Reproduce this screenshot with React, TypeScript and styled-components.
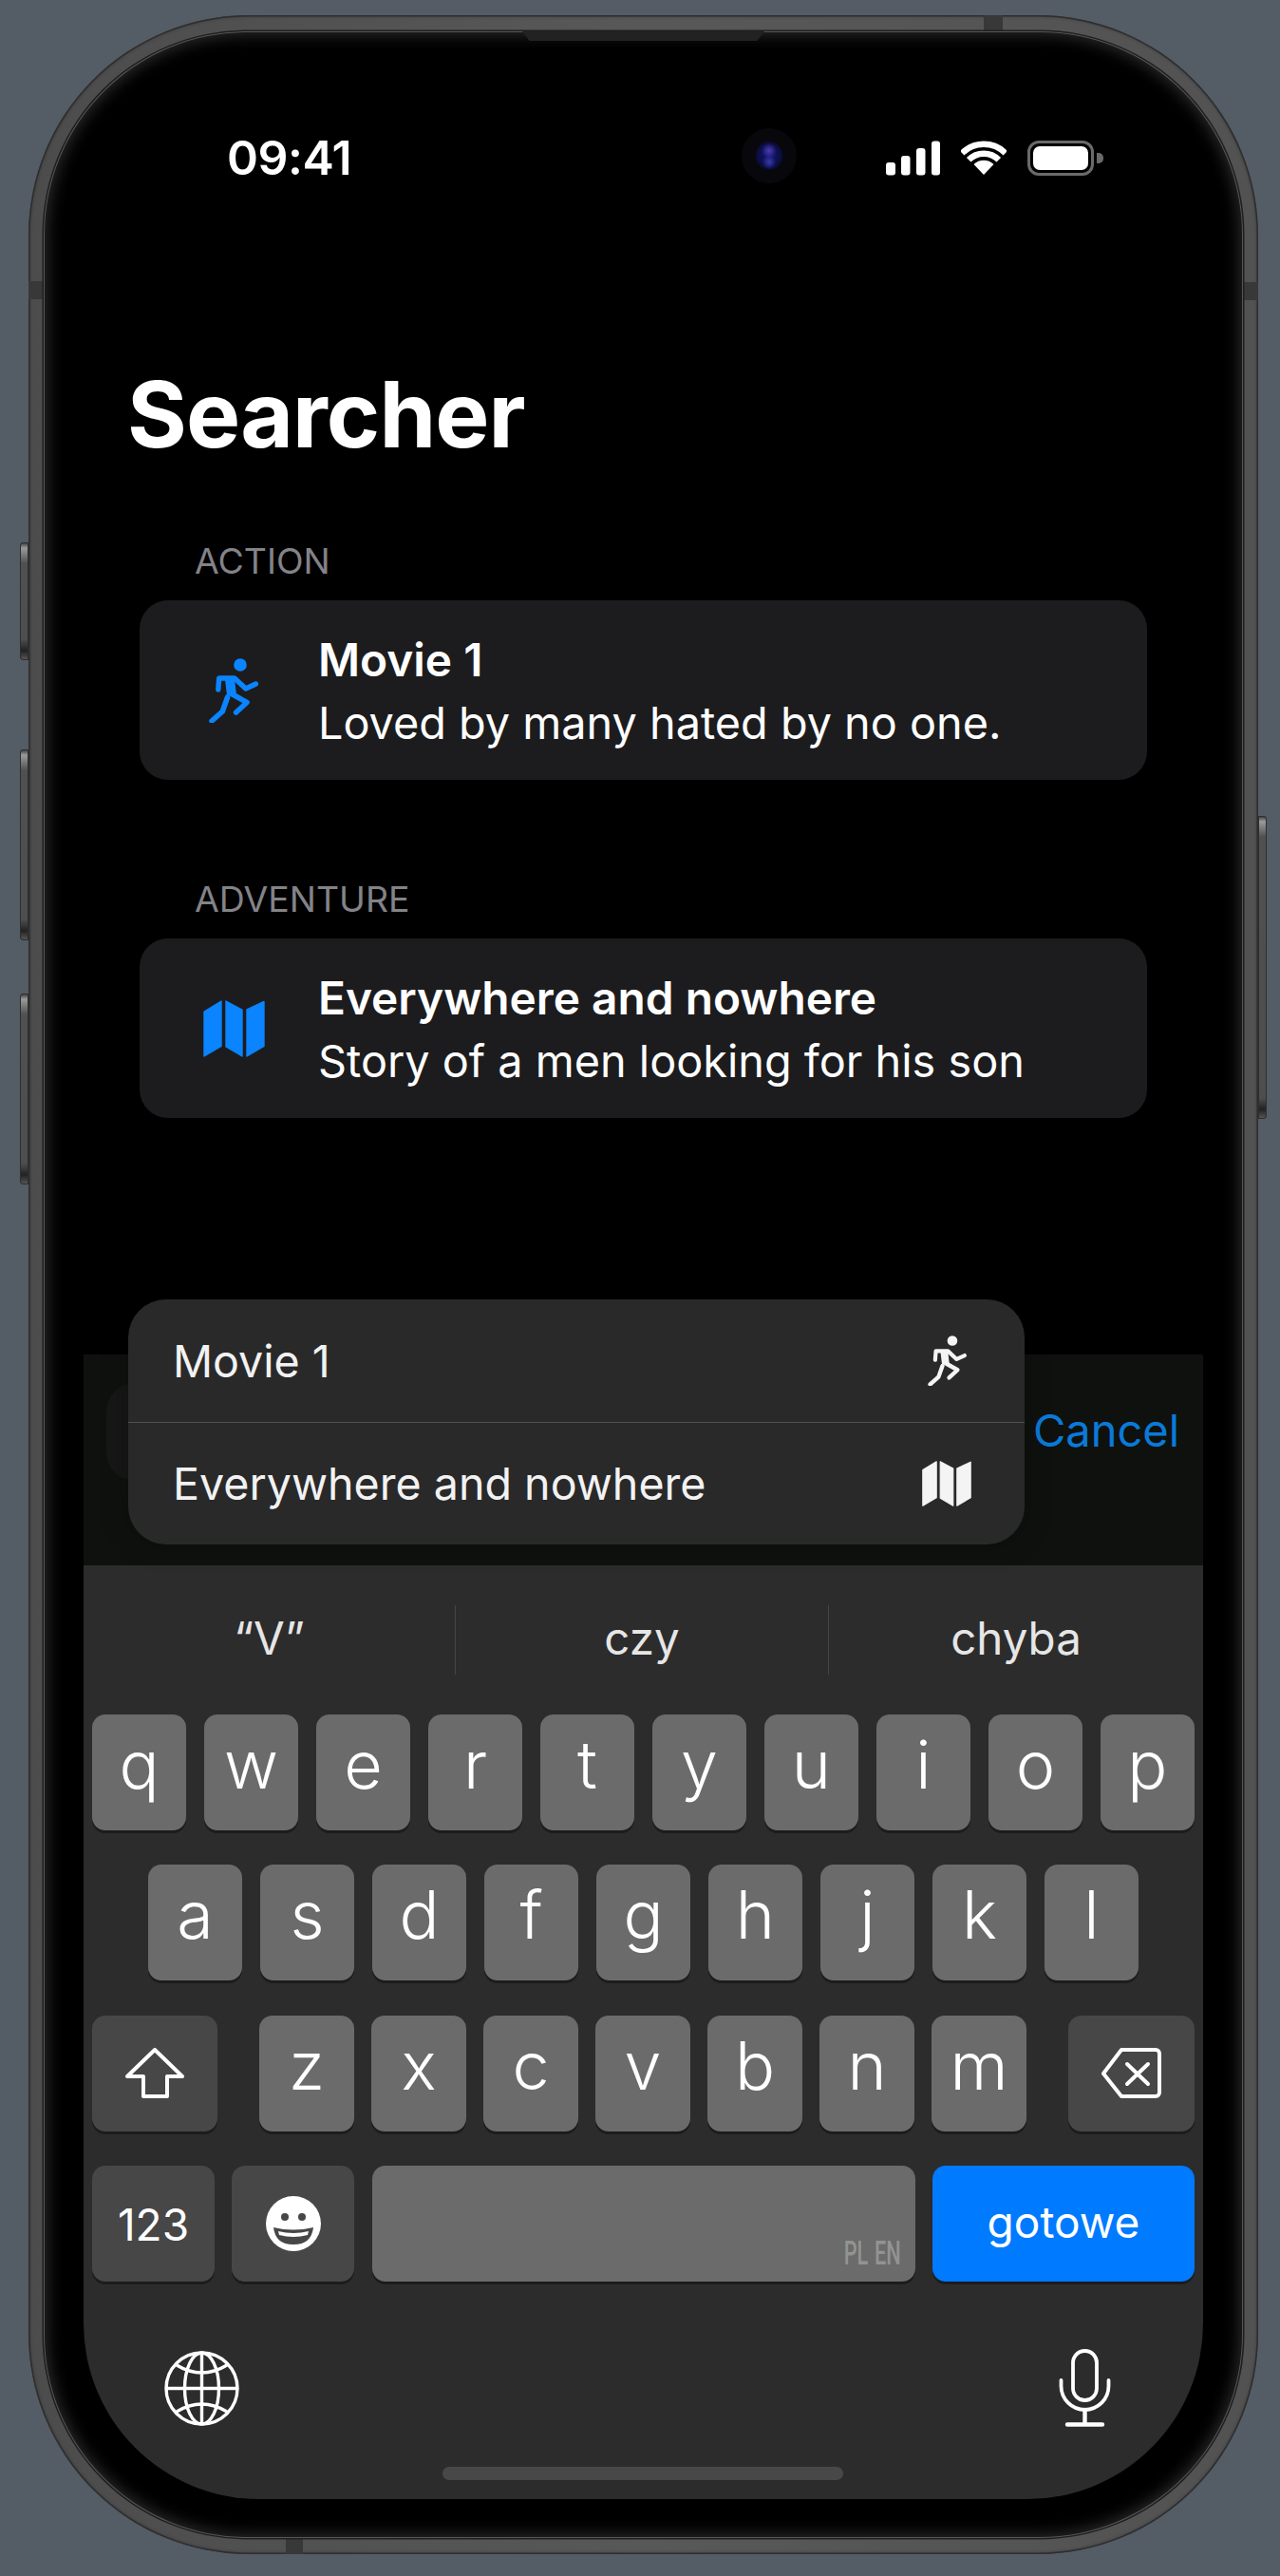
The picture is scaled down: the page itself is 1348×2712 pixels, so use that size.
import React from "react";
import styled, { createGlobalStyle } from "styled-components";

const Global = createGlobalStyle`
  html, body { margin: 0; padding: 0; background: #545c66; }
  body { font-family: "Inter", "Liberation Sans", sans-serif; -webkit-font-smoothing: antialiased; }
  * { box-sizing: border-box; }
`;

const Page = styled.div`
  width: 1348px;
  height: 2712px;
  padding: 16px 0 0 30px;
  background: #545c66;
  overflow: hidden;
`;

const Phone = styled.div`
  position: relative;
  width: 1295px;
  height: 2673px;
  padding: 17px 16px;
  border-radius: 232px;
  background: linear-gradient(90deg, #4c4c4c, #585858 50%, #525252);
  box-shadow: inset 0 0 0 1.5px #2e2e2e, inset 0 0 3px 2px rgba(30, 30, 30, 0.3);
`;

const SideButton = styled.div<{ $side: "left" | "right"; $top: number; $height: number }>`
  position: absolute;
  top: ${(p) => p.$top}px;
  height: ${(p) => p.$height}px;
  width: 9px;
  ${(p) => (p.$side === "left" ? "left: -9px; border-radius: 4px 0 0 4px;" : "right: -9px; border-radius: 0 4px 4px 0;")}
  background: linear-gradient(180deg, #333 0, #9a9a9a 6px, #505050 22px, #4e4e4e calc(100% - 22px), #222 calc(100% - 10px), #5a5a5a 100%);
  box-shadow: inset 0 0 0 1px #2e2e2e;
`;

const Antenna = styled.div<{ $x: number; $y: number; $w: number; $h: number }>`
  position: absolute;
  left: ${(p) => p.$x}px;
  top: ${(p) => p.$y}px;
  width: ${(p) => p.$w}px;
  height: ${(p) => p.$h}px;
  background: #383838;
`;

const Speaker = styled.div`
  position: absolute;
  left: 520px;
  top: 17px;
  width: 255px;
  height: 10px;
  background: #222;
  clip-path: polygon(0 0, 100% 0, 97% 100%, 3% 100%);
  z-index: 1;
`;

const Screen = styled.div`
  position: relative;
  width: 1263px;
  height: 2639px;
  padding: 42px 0 0 42px;
  border-radius: 214px;
  background: #000;
  box-shadow: 0 0 0 1.5px #1f1f1f, inset 0 0 0 1px #555, inset 0 0 16px 4px rgba(120, 120, 120, 0.36);
`;

const Display = styled.div`
  position: relative;
  width: 1179px;
  height: 2556px;
  display: flex;
  flex-direction: column;
  color: #fff;
`;

const StatusBar = styled.div`
  height: 182px;
  padding-left: 151px;
  display: grid;
  grid-template-columns: 542px 58px auto;
  align-items: center;
`;

const Time = styled.div`
  font-size: 50px;
  font-weight: 600;
  line-height: 60px;
  letter-spacing: -0.5px;
`;

const Camera = styled.div`
  width: 58px;
  height: 58px;
  margin-top: -4px;
  border-radius: 50%;
  background: #08080c;
  display: flex;
  align-items: center;
  justify-content: center;
`;

const Lens = styled.div`
  width: 28px;
  height: 30px;
  border-radius: 50%;
  background:
    radial-gradient(circle at 50% 32%, #4c3cb0 0, rgba(60, 48, 160, 0) 32%),
    radial-gradient(circle at 50% 72%, #3a3ca8 0, rgba(50, 60, 160, 0) 28%),
    radial-gradient(circle at 50% 50%, #15187a 0, #0c0f4c 50%, #06061a 100%);
`;

const StatusIcons = styled.div`
  margin-left: 94px;
  display: flex;
  align-items: center;
  gap: 22px;
`;

const Battery = styled.div`
  position: relative;
  width: 70px;
  height: 37px;
  padding: 3px;
  border: 3px solid #6a6a6a;
  border-radius: 12px;
  &::after {
    content: "";
    position: absolute;
    right: -13px;
    top: 10px;
    width: 7px;
    height: 11px;
    border-radius: 0 5px 5px 0;
    background: #6a6a6a;
  }
`;

const BatteryFill = styled.div`
  width: 100%;
  height: 100%;
  border-radius: 7px;
  background: #fff;
`;

const Title = styled.h1`
  margin: 119px 0 72px 46px;
  height: 120px;
  font-size: 96px;
  line-height: 120px;
  font-weight: 700;
  letter-spacing: -0.9px;
`;

const Section = styled.section`
  padding: 0 59px;
  margin-bottom: 103px;
`;

const SectionLabel = styled.div`
  height: 46px;
  margin: 0 0 18px 58px;
  font-size: 37.4px;
  line-height: 46px;
  color: #838388;
`;

const Card = styled.div`
  height: 189px;
  padding-left: 49px;
  display: flex;
  align-items: center;
  gap: 39px;
  border-radius: 30px;
  background: #1c1c1e;
`;

const CardIcon = styled.div`
  width: 100px;
  display: flex;
  justify-content: center;
  color: #0a84ff;
`;

const CardText = styled.div`
  padding-top: 2px;
  font-size: 46.8px;
  line-height: 66px;
`;

const CardTitle = styled.div`
  font-size: 47.8px;
  font-weight: 600;
`;

const SearchBar = styled.div`
  margin-top: auto;
  height: 222px;
  padding: 30px 0 0 24px;
  display: flex;
  align-items: flex-start;
  background: #0f110f;
`;

const SearchField = styled.div`
  width: 966px;
  height: 103px;
  border-radius: 30px;
  background: #161716;
`;

const Cancel = styled.div`
  margin-left: 10px;
  height: 103px;
  font-size: 47px;
  line-height: 100px;
  color: #0a7ad9;
`;

const Popup = styled.div`
  position: absolute;
  left: 47px;
  top: 1293px;
  width: 944px;
  border-radius: 40px;
  background: #29292a;
  box-shadow: 0 0 30px rgba(0, 0, 0, 0.25);
`;

const PopupRow = styled.div<{ $divided?: boolean }>`
  height: 129px;
  padding: 0 52px 0 47px;
  display: flex;
  align-items: center;
  justify-content: space-between;
  font-size: 46.6px;
  color: #f2f2f2;
  border-top: ${(p) => (p.$divided ? "1px solid #505051" : "none")};
`;

const PopupIcon = styled.div`
  width: 60px;
  display: flex;
  justify-content: center;
  color: #f4f4f4;
`;

const Keyboard = styled.div`
  height: 983px;
  flex: none;
  background: #2c2c2c;
  border-radius: 0 0 185px 185px;
`;

const Suggestions = styled.div`
  height: 157px;
  display: grid;
  grid-template-columns: 391px 1px 392px 1px 1fr;
  align-items: center;
`;

const Suggestion = styled.div`
  text-align: center;
  font-size: 47.5px;
  line-height: 60px;
  margin-top: -4px;
  color: #e6e6e6;
`;

const SuggestionDivider = styled.div`
  height: 73px;
  background: #454545;
`;

const Keys = styled.div`
  padding: 0 9px;
  display: flex;
  flex-direction: column;
  gap: 36.4px;
`;

const KeyRow = styled.div`
  display: flex;
  justify-content: center;
  gap: 18.4px;
`;

const SpreadRow = styled.div`
  display: flex;
  justify-content: space-between;
`;

const LetterGroup = styled.div`
  display: flex;
  gap: 18.4px;
`;

const Key = styled.div<{ $tone?: "letter" | "fn" | "blue"; $w?: number; $grow?: boolean }>`
  position: relative;
  flex: ${(p) => (p.$grow ? "1" : "none")};
  width: ${(p) => (p.$w ? `${p.$w}px` : "99.6px")};
  height: 122px;
  display: flex;
  align-items: center;
  justify-content: center;
  border-radius: 14px;
  background: ${(p) => (p.$tone === "fn" ? "#474747" : p.$tone === "blue" ? "#007aff" : "#6b6b6b")};
  box-shadow: 0 3px 0 #1c1c1c;
  color: #fff;
`;

const Letter = styled.span`
  font-size: 70px;
  font-weight: 300;
  line-height: 90px;
  padding-bottom: 16px;
`;

const FnLabel = styled.span<{ $drop?: number }>`
  font-size: 46px;
  line-height: 60px;
  margin-top: ${(p) => p.$drop || 0}px;
`;

const SpaceHint = styled.span`
  position: absolute;
  right: 15px;
  bottom: 9px;
  font-family: "Roboto", "Liberation Sans", sans-serif;
  font-size: 35px;
  font-weight: 500;
  line-height: 40px;
  word-spacing: 2px;
  color: #939393;
  transform: scaleX(0.62);
  transform-origin: right center;
  white-space: nowrap;
`;

const BottomBar = styled.div`
  height: 82px;
  margin-top: 71px;
  padding: 0 97px 0 85px;
  display: flex;
  align-items: center;
  justify-content: space-between;
`;

const HomeBar = styled.div`
  position: absolute;
  left: 378px;
  top: 2522px;
  width: 422px;
  height: 14px;
  border-radius: 7px;
  background: #484848;
`;

const Run = ({ w, h }: { w: number; h: number }) => (
  <svg width={w} height={h} viewBox="0 0 52 68" fill="none" stroke="currentColor" strokeLinecap="round" strokeLinejoin="round">
    <circle cx="33" cy="7" r="6.8" fill="currentColor" stroke="none" />
    <path d="M9.8 33 L10.7 21 H27 L38.8 32 L49.5 27" strokeWidth="5.4" />
    <path d="M22 22 L24 39" strokeWidth="10" strokeLinecap="butt" />
    <path d="M19.6 41 L14.3 56 L3 66" strokeWidth="5.6" />
    <path d="M24 37.5 L40 46.5 L28.6 57" strokeWidth="5.6" />
  </svg>
);

const MapIcon = ({ w, h }: { w: number; h: number }) => (
  <svg width={w} height={h} viewBox="0 0 65 60" fill="currentColor" stroke="currentColor" strokeWidth="1.4" strokeLinejoin="round">
    <path d="M1 12 L19 1 V48.5 L1 59 Z" />
    <path d="M24 1 L41 10 V59 L24 49 Z" />
    <path d="M46 10 L64 1.5 V48.5 L46 59 Z" />
  </svg>
);

const Signal = () => (
  <svg width="57" height="37" viewBox="0 0 57 37" fill="#fff">
    <rect x="0" y="23" width="10" height="13.5" rx="3" />
    <rect x="16" y="16" width="9.5" height="20.5" rx="3" />
    <rect x="32" y="8" width="9.5" height="28.5" rx="3" />
    <rect x="48" y="0.5" width="9" height="36" rx="3" />
  </svg>
);

const Wifi = () => (
  <svg width="48" height="36" viewBox="0 0 48 36" fill="none" stroke="#fff" strokeWidth="6.4">
    <path d="M24 36 L13.5 25 A15 15 0 0 1 34.5 25 Z" fill="#fff" stroke="none" />
    <path d="M8.2 20.2 A22.4 22.4 0 0 1 39.8 20.2" />
    <path d="M1.2 13.2 A32.3 32.3 0 0 1 46.8 13.2" />
  </svg>
);

const Shift = () => (
  <svg width="62" height="54" viewBox="0 0 62 54" fill="none" stroke="#fff" strokeWidth="4" strokeLinejoin="round">
    <path d="M31 2 L60 30 H44 V51 H19 V30 H2 Z" />
  </svg>
);

const Delete = () => (
  <svg width="63" height="53" viewBox="0 0 63 53" fill="none" stroke="#fff" strokeWidth="4" strokeLinejoin="round" strokeLinecap="round">
    <path d="M21 2 H57 a4 4 0 0 1 4 4 V47 a4 4 0 0 1 -4 4 H21 L2 27 Z" />
    <path d="M27 17 L49 38 M49 17 L27 38" />
  </svg>
);

const Emoji = () => (
  <svg width="58" height="58" viewBox="0 0 58 58">
    <circle cx="29" cy="29" r="29" fill="#fff" />
    <circle cx="20" cy="22" r="4" fill="#474747" />
    <circle cx="38" cy="22" r="4" fill="#474747" />
    <path d="M8 33 Q29 38 50 33 Q48 51 29 51 Q10 51 8 33 Z" fill="#474747" />
    <path d="M13 37 Q29 41 45 37 L44 41 Q29 45 14 41 Z" fill="#fff" />
  </svg>
);

const Globe = () => (
  <svg width="79" height="79" viewBox="0 0 79 79" fill="none" stroke="#fff" strokeWidth="3.4">
    <circle cx="39.5" cy="39.5" r="37.5" />
    <ellipse cx="39.5" cy="39.5" rx="18" ry="37.5" />
    <path d="M39.5 2 V77 M2 39.5 H77" />
    <path d="M13 15 Q39.5 31 66 15 M13 64 Q39.5 48 66 64" />
  </svg>
);

const Mic = () => (
  <svg width="55" height="82" viewBox="0 0 55 82" fill="none" stroke="#fff" strokeWidth="3.8" strokeLinecap="round">
    <rect x="15" y="2" width="25" height="52" rx="12.5" />
    <path d="M2.5 33 V39 A25 25 0 0 0 52.5 39 V33" />
    <path d="M27.5 64 V79 M9 79.5 H46" strokeWidth="4.4" />
  </svg>
);

const row1 = ["q", "w", "e", "r", "t", "y", "u", "i", "o", "p"];
const row2 = ["a", "s", "d", "f", "g", "h", "j", "k", "l"];
const row3 = ["z", "x", "c", "v", "b", "n", "m"];

const LetterKey = ({ c }: { c: string }) => (
  <Key>
    <Letter>{c}</Letter>
  </Key>
);

export default function App() {
  return (
    <Page>
      <Global />
      <Phone>
        <SideButton $side="left" $top={555} $height={124} />
        <SideButton $side="left" $top={773} $height={201} />
        <SideButton $side="left" $top={1030} $height={201} />
        <SideButton $side="right" $top={843} $height={319} />
        <Antenna $x={1006} $y={0} $w={20} $h={17} />
        <Antenna $x={0} $y={280} $w={16} $h={19} />
        <Antenna $x={1279} $y={281} $w={16} $h={19} />
        <Antenna $x={271} $y={2657} $w={18} $h={16} />
        <Speaker />
        <Screen>
          <Display>
            <StatusBar>
              <Time>09:41</Time>
              <Camera>
                <Lens />
              </Camera>
              <StatusIcons>
                <Signal />
                <Wifi />
                <Battery>
                  <BatteryFill />
                </Battery>
              </StatusIcons>
            </StatusBar>
            <Title>Searcher</Title>
            <Section>
              <SectionLabel>ACTION</SectionLabel>
              <Card>
                <CardIcon>
                  <Run w={52} h={68} />
                </CardIcon>
                <CardText>
                  <CardTitle>Movie 1</CardTitle>
                  <div>Loved by many hated by no one.</div>
                </CardText>
              </Card>
            </Section>
            <Section>
              <SectionLabel>ADVENTURE</SectionLabel>
              <Card>
                <CardIcon>
                  <MapIcon w={65} h={60} />
                </CardIcon>
                <CardText>
                  <CardTitle>Everywhere and nowhere</CardTitle>
                  <div>Story of a men looking for his son</div>
                </CardText>
              </Card>
            </Section>
            <SearchBar>
              <SearchField />
              <Cancel>Cancel</Cancel>
            </SearchBar>
            <Keyboard>
              <Suggestions>
                <Suggestion>“V”</Suggestion>
                <SuggestionDivider />
                <Suggestion>czy</Suggestion>
                <SuggestionDivider />
                <Suggestion>chyba</Suggestion>
              </Suggestions>
              <Keys>
                <KeyRow>
                  {row1.map((c) => (
                    <LetterKey key={c} c={c} />
                  ))}
                </KeyRow>
                <KeyRow>
                  {row2.map((c) => (
                    <LetterKey key={c} c={c} />
                  ))}
                </KeyRow>
                <SpreadRow>
                  <Key $tone="fn" $w={132}>
                    <Shift />
                  </Key>
                  <LetterGroup>
                    {row3.map((c) => (
                      <LetterKey key={c} c={c} />
                    ))}
                  </LetterGroup>
                  <Key $tone="fn" $w={133}>
                    <Delete />
                  </Key>
                </SpreadRow>
                <KeyRow>
                  <Key $tone="fn" $w={129}>
                    <FnLabel $drop={2}>123</FnLabel>
                  </Key>
                  <Key $tone="fn" $w={129}>
                    <Emoji />
                  </Key>
                  <Key $grow>
                    <SpaceHint>PL EN</SpaceHint>
                  </Key>
                  <Key $tone="blue" $w={276}>
                    <FnLabel $drop={-4}>gotowe</FnLabel>
                  </Key>
                </KeyRow>
              </Keys>
              <BottomBar>
                <Globe />
                <Mic />
              </BottomBar>
            </Keyboard>
            <Popup>
              <PopupRow>
                Movie 1
                <PopupIcon>
                  <Run w={41} h={53} />
                </PopupIcon>
              </PopupRow>
              <PopupRow $divided>
                Everywhere and nowhere
                <PopupIcon>
                  <MapIcon w={52} h={48} />
                </PopupIcon>
              </PopupRow>
            </Popup>
            <HomeBar />
          </Display>
        </Screen>
      </Phone>
    </Page>
  );
}
